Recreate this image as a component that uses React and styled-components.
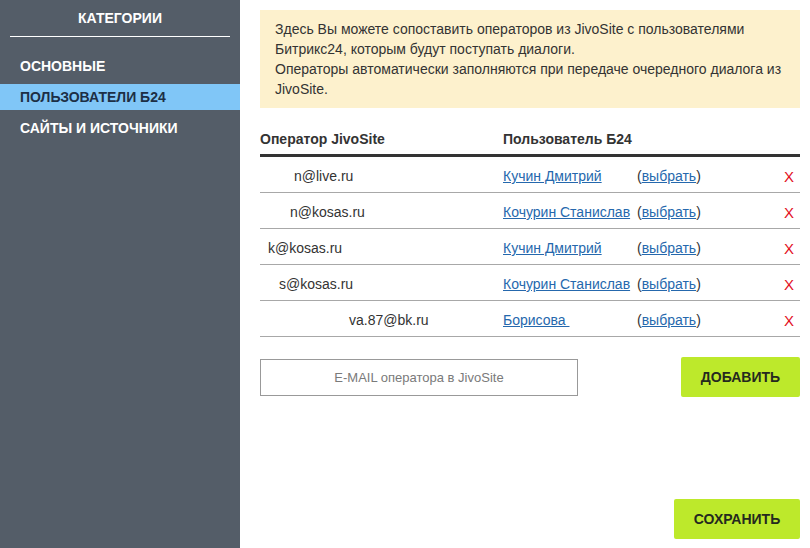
import React from "react";
import styled, { createGlobalStyle } from "styled-components";

const GlobalStyle = createGlobalStyle`
  html, body { margin: 0; padding: 0; height: 100%; }
  body {
    font-family: "Liberation Sans", Arial, sans-serif;
    background: #ffffff;
    color: #333333;
  }
  #root { height: 100%; }
`;

const Layout = styled.div`
  display: flex;
  width: 810px;
  height: 548px;
  overflow: hidden;
`;

const Sidebar = styled.aside`
  width: 240px;
  flex: 0 0 240px;
  background: #545d68;
  display: flex;
  flex-direction: column;
`;

const SidebarTitle = styled.div`
  margin: 0 10px;
  height: 37px;
  box-sizing: border-box;
  padding-top: 10px;
  border-bottom: 1px solid #ffffff;
  color: #ffffff;
  font-size: 14px;
  font-weight: 700;
  text-align: center;
  line-height: 17px;
`;

const NavList = styled.nav`
  display: flex;
  flex-direction: column;
  gap: 5px;
  margin-top: 16px;
`;

const NavItem = styled.div`
  height: 26px;
  line-height: 26px;
  padding-left: 20px;
  font-size: 14px;
  font-weight: 700;
  color: ${(p) => (p.$active ? "#1d2f45" : "#ffffff")};
  background: ${(p) => (p.$active ? "#80c6f7" : "transparent")};
`;

const Main = styled.main`
  flex: 1;
  padding: 10px 10px 0 20px;
  display: flex;
  flex-direction: column;
`;

const Notice = styled.div`
  background: #fdf1cd;
  padding: 9px 15px;
  font-size: 14px;
  line-height: 20px;
  color: #333333;
`;

const Table = styled.div`
  margin-top: 16px;
  display: flex;
  flex-direction: column;
`;

const HeadRow = styled.div`
  display: grid;
  grid-template-columns: 243px 1fr;
  height: 30px;
  align-items: center;
  border-bottom: 3px solid #333333;
  font-size: 14px;
  font-weight: 700;
  color: #333333;
`;

const Row = styled.div`
  display: grid;
  grid-template-columns: 243px 134px 1fr 22px;
  height: 36px;
  box-sizing: border-box;
  padding-top: 3px;
  align-items: center;
  border-bottom: 1px solid #a8a8a8;
  font-size: 14px;
`;

const Email = styled.span`
  padding-left: ${(p) => p.$indent}px;
  color: #333333;
  white-space: nowrap;
`;

const Link = styled.a`
  color: #2568ad;
  text-decoration: underline;
  cursor: pointer;
  white-space: pre;
`;

const Pick = styled.span`
  color: #333333;
`;

const Remove = styled.span`
  color: #e3101e;
  font-size: 15px;
  text-align: center;
  cursor: pointer;
`;

const AddRow = styled.div`
  margin-top: 20px;
  display: flex;
  align-items: center;
  justify-content: space-between;
`;

const EmailInput = styled.input`
  width: 318px;
  height: 37px;
  box-sizing: border-box;
  border: 1px solid #999999;
  background: #ffffff;
  font-family: "Liberation Sans", Arial, sans-serif;
  font-size: 13px;
  text-align: center;
  color: #333333;
  outline: none;
  &::placeholder { color: #7a7a7a; }
`;

const Button = styled.button`
  height: 40px;
  width: ${(p) => p.$width}px;
  border: none;
  border-radius: 2px;
  background: #bde92b;
  color: #25291f;
  font-family: "Liberation Sans", Arial, sans-serif;
  font-size: 14px;
  font-weight: 700;
  cursor: pointer;
`;

const Footer = styled.div`
  margin-top: 102px;
  display: flex;
  justify-content: flex-end;
`;

const nav = [
  { label: "ОСНОВНЫЕ" },
  { label: "ПОЛЬЗОВАТЕЛИ Б24", active: true },
  { label: "САЙТЫ И ИСТОЧНИКИ" },
];

const operators = [
  { email: "n@live.ru", indent: 34, user: "Кучин Дмитрий" },
  { email: "n@kosas.ru", indent: 30, user: "Кочурин Станислав" },
  { email: "k@kosas.ru", indent: 8, user: "Кучин Дмитрий" },
  { email: "s@kosas.ru", indent: 19, user: "Кочурин Станислав" },
  { email: "va.87@bk.ru", indent: 89, user: "Борисова " },
];

export default function App() {
  return (
    <>
      <GlobalStyle />
      <Layout>
        <Sidebar>
          <SidebarTitle>КАТЕГОРИИ</SidebarTitle>
          <NavList>
            {nav.map((n) => (
              <NavItem key={n.label} $active={n.active}>
                {n.label}
              </NavItem>
            ))}
          </NavList>
        </Sidebar>
        <Main>
          <Notice>
            Здесь Вы можете сопоставить операторов из JivoSite с пользователями
            Битрикс24, которым будут поступать диалоги.
            <br />
            Операторы автоматически заполняются при передаче очередного диалога
            из JivoSite.
          </Notice>
          <Table>
            <HeadRow>
              <span>Оператор JivoSite</span>
              <span>Пользователь Б24</span>
            </HeadRow>
            {operators.map((o) => (
              <Row key={o.email}>
                <Email $indent={o.indent}>{o.email}</Email>
                <span>
                  <Link>{o.user}</Link>
                </span>
                <Pick>
                  (<Link>выбрать</Link>)
                </Pick>
                <Remove>X</Remove>
              </Row>
            ))}
          </Table>
          <AddRow>
            <EmailInput placeholder="E-MAIL оператора в JivoSite" />
            <Button $width={119}>ДОБАВИТЬ</Button>
          </AddRow>
          <Footer>
            <Button $width={126}>СОХРАНИТЬ</Button>
          </Footer>
        </Main>
      </Layout>
    </>
  );
}
